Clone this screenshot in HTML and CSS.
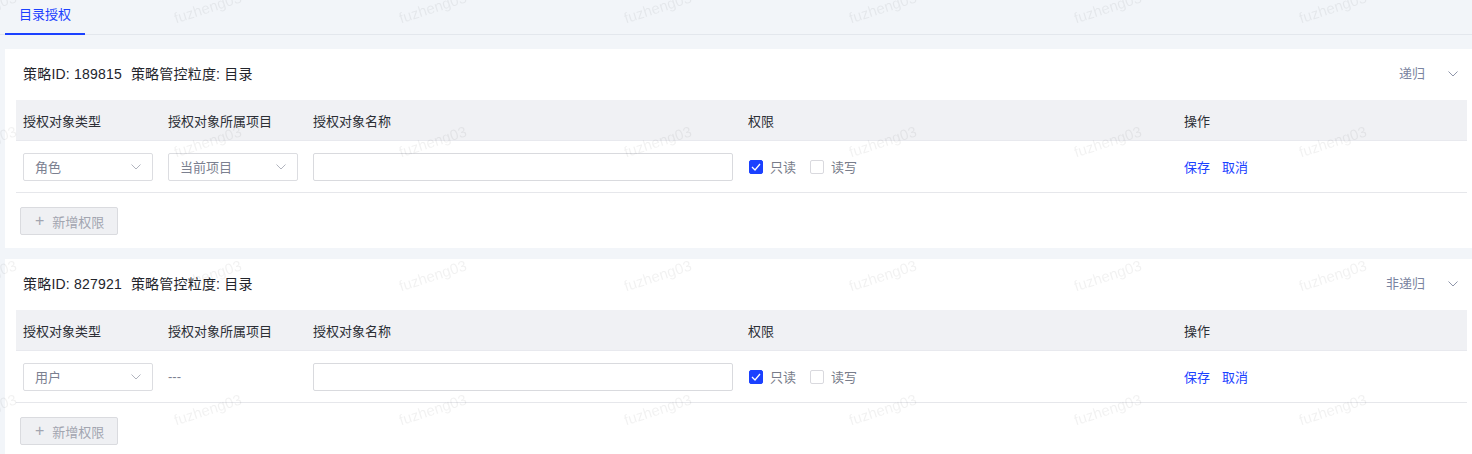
FILE: index.html
```html
<!DOCTYPE html>
<html lang="zh-CN">
<head>
  <meta charset="UTF-8">
  <title>目录授权</title>
  <link rel="stylesheet" href="styles.css">
</head>
<body>
  <div class="tabs">
    <div class="tab active">目录授权</div>
  </div>

  <main class="cards">
    <section class="card">
      <div class="card-head">
        <div class="card-title"><span>策略ID: 189815</span><span class="gap">策略管控粒度: 目录</span></div>
        <div class="card-toggle">递归
          <svg width="10" height="6" viewBox="0 0 10 6"><path d="M0.5 0.5 L5 5 L9.5 0.5" fill="none" stroke="#8f96ab" stroke-width="1"/></svg>
        </div>
      </div>
      <div class="grid thead">
        <div>授权对象类型</div>
        <div>授权对象所属项目</div>
        <div>授权对象名称</div>
        <div>权限</div>
        <div>操作</div>
      </div>
      <div class="grid trow">
        <div><span class="select">角色<svg width="10" height="6" viewBox="0 0 10 6"><path d="M0.5 0.5 L5 5 L9.5 0.5" fill="none" stroke="#b1b4be" stroke-width="1"/></svg></span></div>
        <div><span class="select">当前项目<svg width="10" height="6" viewBox="0 0 10 6"><path d="M0.5 0.5 L5 5 L9.5 0.5" fill="none" stroke="#b1b4be" stroke-width="1"/></svg></span></div>
        <div><span class="input"></span></div>
        <div class="perms">
          <span class="check on"><svg width="10" height="8" viewBox="0 0 10 8"><path d="M1 4 L4 7 L9 1" fill="none" stroke="#fff" stroke-width="1.3"/></svg></span><span class="label">只读</span>
          <span class="check"></span><span class="label">读写</span>
        </div>
        <div class="ops"><a>保存</a><a>取消</a></div>
      </div>
      <button class="add-btn"><span class="plus">+</span>新增权限</button>
    </section>

    <section class="card">
      <div class="card-head">
        <div class="card-title"><span>策略ID: 827921</span><span class="gap">策略管控粒度: 目录</span></div>
        <div class="card-toggle">非递归
          <svg width="10" height="6" viewBox="0 0 10 6"><path d="M0.5 0.5 L5 5 L9.5 0.5" fill="none" stroke="#8f96ab" stroke-width="1"/></svg>
        </div>
      </div>
      <div class="grid thead">
        <div>授权对象类型</div>
        <div>授权对象所属项目</div>
        <div>授权对象名称</div>
        <div>权限</div>
        <div>操作</div>
      </div>
      <div class="grid trow">
        <div><span class="select">用户<svg width="10" height="6" viewBox="0 0 10 6"><path d="M0.5 0.5 L5 5 L9.5 0.5" fill="none" stroke="#b1b4be" stroke-width="1"/></svg></span></div>
        <div class="muted">---</div>
        <div><span class="input"></span></div>
        <div class="perms">
          <span class="check on"><svg width="10" height="8" viewBox="0 0 10 8"><path d="M1 4 L4 7 L9 1" fill="none" stroke="#fff" stroke-width="1.3"/></svg></span><span class="label">只读</span>
          <span class="check"></span><span class="label">读写</span>
        </div>
        <div class="ops"><a>保存</a><a>取消</a></div>
      </div>
      <button class="add-btn"><span class="plus">+</span>新增权限</button>
    </section>
  </main>

  <div class="watermark">
    <span>fuzheng03</span><span>fuzheng03</span><span>fuzheng03</span><span>fuzheng03</span><span>fuzheng03</span><span>fuzheng03</span><span>fuzheng03</span><span>fuzheng03</span>
    <span>fuzheng03</span><span>fuzheng03</span><span>fuzheng03</span><span>fuzheng03</span><span>fuzheng03</span><span>fuzheng03</span><span>fuzheng03</span><span>fuzheng03</span>
    <span>fuzheng03</span><span>fuzheng03</span><span>fuzheng03</span><span>fuzheng03</span><span>fuzheng03</span><span>fuzheng03</span><span>fuzheng03</span><span>fuzheng03</span>
    <span>fuzheng03</span><span>fuzheng03</span><span>fuzheng03</span><span>fuzheng03</span><span>fuzheng03</span><span>fuzheng03</span><span>fuzheng03</span><span>fuzheng03</span>
  </div>
</body>
</html>
```

FILE: styles.css
```css
body {
  margin: 0;
  font-family: "Liberation Sans", "Noto Sans CJK SC", sans-serif;
  font-size: 13px;
  background: #f2f5f9;
  color: #2e3035;
  overflow: hidden;
}
.tabs {
  display: flex;
  height: 34px;
  padding-left: 5px;
  border-bottom: 1px solid #e3e7ed;
}
.tab {
  width: 80px;
  height: 33px;
  line-height: 30px;
  text-align: center;
  color: #1b41ff;
  border-bottom: 2px solid #1b41ff;
  margin-bottom: -1px;
}
.cards {
  margin-top: 14px;
}
.card {
  background: white;
  margin-left: 5px;
  padding: 0 5px 13px 11px;
  margin-bottom: 11px;
}
.card-head {
  display: flex;
  justify-content: space-between;
  align-items: center;
  height: 51px;
  padding: 0 9px 4px 7px;
  box-sizing: border-box;
}
.card-title {
  font-size: 14px;
  color: #23252b;
  letter-spacing: 0.2px;
}
.card-title .gap {
  margin-left: 9px;
}
.card-toggle {
  display: flex;
  align-items: center;
  gap: 23px;
  color: #7a83a0;
  font-size: 13px;
}
.card-toggle svg {
  margin-top: 2px;
}
.grid {
  display: grid;
  grid-template-columns: 145px 145px 435px 436px 1fr;
  align-items: center;
}
.grid > div {
  padding-left: 7px;
}
.thead {
  height: 40px;
  background: #f0f1f4;
  border-bottom: 1px solid #e8e9ee;
  color: #2b2e34;
}
.trow {
  height: 51px;
  border-bottom: 1px solid #e6e7eb;
}
.select {
  display: flex;
  justify-content: space-between;
  align-items: center;
  width: 130px;
  height: 28px;
  box-sizing: border-box;
  border: 1px solid #dcdde1;
  border-radius: 2px;
  padding: 0 11px 0 11px;
  color: #7b8090;
}
.input {
  display: block;
  width: 420px;
  height: 28px;
  box-sizing: border-box;
  border: 1px solid #d9dade;
  border-radius: 2px;
}
.muted {
  color: #7b8090;
}
.perms {
  display: flex;
  align-items: center;
}
.check {
  display: inline-flex;
  align-items: center;
  justify-content: center;
  width: 14px;
  height: 14px;
  box-sizing: border-box;
  border: 1px solid #d9d9de;
  border-radius: 2px;
  margin-left: 1px;
  background: white;
}
.check.on {
  background: #1b41ff;
  border-color: #1b41ff;
}
.label {
  margin-left: 7px;
  margin-right: 13px;
  color: #777c8a;
}
.ops a {
  color: #1b41ff;
  margin-right: 12px;
  cursor: pointer;
}
.add-btn {
  display: flex;
  align-items: center;
  margin: 14px 0 0 4px;
  width: 98px;
  height: 28px;
  padding: 0 0 0 14px;
  background: #eff0f3;
  border: 1px solid #dadbdf;
  border-radius: 2px;
  font-family: inherit;
  font-size: 13px;
  color: #a2a5b0;
}
.add-btn .plus {
  font-size: 16px;
  margin-right: 8px;
  font-weight: 300;
}
.watermark {
  position: fixed;
  left: -130px;
  top: -60px;
  display: grid;
  grid-template-columns: repeat(8, 225px);
  grid-auto-rows: 134px;
  pointer-events: none;
}
.watermark span {
  display: flex;
  align-items: center;
  justify-content: center;
  transform: rotate(-18deg);
  font-size: 15px;
  color: rgba(0, 0, 0, 0.055);
}
```
